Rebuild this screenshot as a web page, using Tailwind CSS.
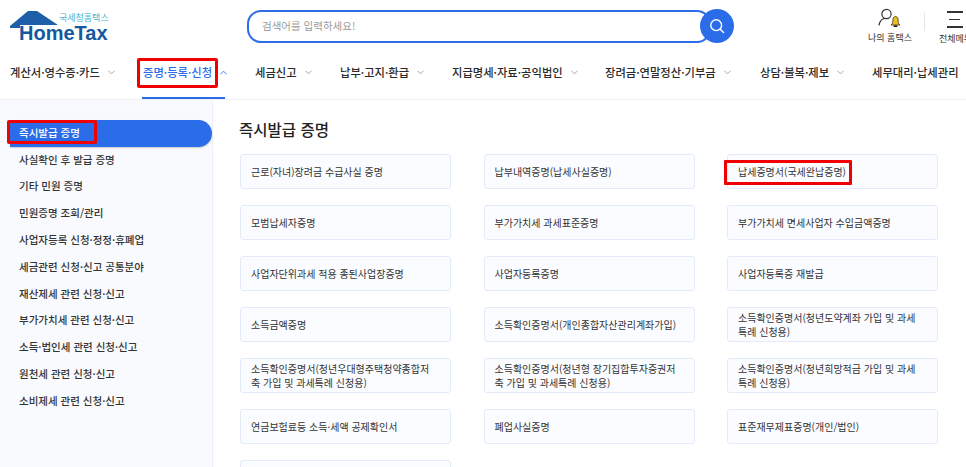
<!DOCTYPE html>
<html lang="ko">
<head>
<meta charset="UTF-8">
<title>HomeTax</title>
<script src="https://cdn.jsdelivr.net/npm/@tailwindcss/browser@4"></script>
</head>
<body class="w-[966px] h-[467px] overflow-hidden bg-white font-['Noto_Sans_CJK_KR','Noto_Sans',sans-serif] text-[#222]">

<!-- Header -->
<header class="h-[100px] border-b border-[#eef0f5]">
  <div class="h-[51px] flex items-start">
    <!-- Logo -->
    <div class="relative w-[247px] h-[51px] shrink-0">
      <svg class="absolute left-[9px] top-[10px]" width="50" height="20" viewBox="0 0 50 20">
        <path d="M1 16 L19 1 L28 1 L49 15 L19 15 L11 15 L11 18 L1 18 Z" fill="#1d5fa8"/>
      </svg>
      <span class="absolute left-[59px] top-[13px] text-[9px] leading-[10px] text-[#45b4d2]">국세청홈택스</span>
      <span class="absolute left-[19px] top-[23px] font-['Liberation_Sans',sans-serif] font-bold text-[20px] leading-[20px] text-[#14589f]">HomeTax</span>
    </div>
    <!-- Search -->
    <div class="flex items-center mt-[9px] w-[487px] shrink-0">
      <div class="w-[466px] h-[33px] border-2 border-[#2b6de8] rounded-[14px] flex items-center pl-[13px] text-[10.5px] text-[#9a9a9a]">검색어를 입력하세요!</div>
      <button class="-ml-[11px] w-[34px] h-[34px] rounded-full bg-[#2b6de8] flex items-center justify-center shrink-0">
        <svg width="16" height="16" viewBox="0 0 16 16" fill="none" stroke="#fff" stroke-width="1.4" stroke-linecap="round"><circle cx="7.2" cy="7.2" r="5.4"/><path d="M11.2 11.2 L14.6 14.6"/></svg>
      </button>
    </div>
    <!-- Right icons -->
    <div class="flex items-start ml-[134px] mt-[8px]">
      <div class="w-[46px] flex flex-col items-center -ml-[1px]">
        <svg width="24" height="20" viewBox="0 0 24 20" fill="none">
          <circle cx="8.5" cy="6" r="4.6" stroke="#333" stroke-width="1.2"/>
          <path d="M1 17 C2 12.5 4.5 10.5 7 10.5 L10 10.5" stroke="#333" stroke-width="1.2" stroke-linecap="round"/>
          <path d="M13 17 C15 16 14.6 14 15 11 C15.3 9.2 16.4 8.5 17.5 8.5 C18.6 8.5 19.7 9.2 20 11 C20.4 14 20 16 22 17 Z" fill="#f3bd15" stroke="#222" stroke-width="0.7"/>
          <rect x="15.5" y="17.3" width="4" height="1.8" rx="0.9" fill="#222"/>
        </svg>
        <span class="mt-[4px] text-[9px] leading-[12px] whitespace-nowrap text-[#333]">나의 홈택스</span>
      </div>
      <div class="w-px h-[18px] bg-[#e6e6e6] ml-[11px] mt-[5px]"></div>
      <div class="ml-[14px] w-[40px] shrink-0 flex flex-col items-start">
        <div class="ml-[8px] mt-[3px] w-[16px] flex flex-col gap-[6px]">
          <div class="h-[1.5px] bg-[#333]"></div>
          <div class="h-[1.5px] w-[11px] ml-[2px] bg-[#333]"></div>
          <div class="h-[1.5px] bg-[#333]"></div>
        </div>
        <span class="mt-[5px] text-[9px] leading-[12px] whitespace-nowrap text-[#333]">전체메뉴</span>
      </div>
    </div>
  </div>

  <!-- Nav -->
  <nav class="h-[48px] flex items-start pl-[10px] pt-[12px] text-[11.3px] leading-[18px] font-medium whitespace-nowrap text-[#2a2a2a]">
    <a class="flex items-center w-[133px]">계산서·영수증·카드
      <svg class="ml-[8px]" width="7" height="5" viewBox="0 0 8 5" fill="none" stroke="#999" stroke-width="1"><path d="M0.5 0.5 L4 4 L7.5 0.5"/></svg></a>
    <a class="relative flex items-center w-[112px] text-[#2b6de8]">증명·등록·신청
      <svg class="ml-[8px]" width="7" height="5" viewBox="0 0 8 5" fill="none" stroke="#2b6de8" stroke-width="1"><path d="M0.5 4.5 L4 1 L7.5 4.5"/></svg>
      <span class="absolute left-[-6px] top-[-5px] w-[81px] h-[30px] border-[3px] border-[#f00000] rounded-[2px]"></span>
      <span class="absolute left-[-1px] top-[34px] w-[83px] h-[2px] bg-[#2b6de8]"></span></a>
    <a class="flex items-center w-[85px]">세금신고
      <svg class="ml-[8px]" width="7" height="5" viewBox="0 0 8 5" fill="none" stroke="#999" stroke-width="1"><path d="M0.5 0.5 L4 4 L7.5 0.5"/></svg></a>
    <a class="flex items-center w-[112px]">납부·고지·환급
      <svg class="ml-[8px]" width="7" height="5" viewBox="0 0 8 5" fill="none" stroke="#999" stroke-width="1"><path d="M0.5 0.5 L4 4 L7.5 0.5"/></svg></a>
    <a class="flex items-center w-[153px]">지급명세·자료·공익법인
      <svg class="ml-[8px]" width="7" height="5" viewBox="0 0 8 5" fill="none" stroke="#999" stroke-width="1"><path d="M0.5 0.5 L4 4 L7.5 0.5"/></svg></a>
    <a class="flex items-center w-[155px]">장려금·연말정산·기부금
      <svg class="ml-[8px]" width="7" height="5" viewBox="0 0 8 5" fill="none" stroke="#999" stroke-width="1"><path d="M0.5 0.5 L4 4 L7.5 0.5"/></svg></a>
    <a class="flex items-center w-[112px]">상담·불복·제보
      <svg class="ml-[8px]" width="7" height="5" viewBox="0 0 8 5" fill="none" stroke="#999" stroke-width="1"><path d="M0.5 0.5 L4 4 L7.5 0.5"/></svg></a>
    <a>세무대리·납세관리</a>
  </nav>
</header>

<div class="flex h-[367px]">
  <!-- Sidebar -->
  <aside class="w-[213px] shrink-0 bg-[#f9fafe] border-r border-[#eef0f5] pt-[20px] text-[10.5px] font-medium text-[#333]">
    <div class="relative ml-[10px] h-[27px] flex items-center pl-[9px] pb-[2px] bg-[#2b6de8] text-white rounded-r-[14px] shadow-[0_1px_2px_rgba(0,0,0,0.2)]">즉시발급 증명
      <span class="absolute left-[-3px] top-[0px] w-[90px] h-[24px] border-[3px] border-[#f00000] rounded-[2px]"></span>
    </div>
    <ul class="pl-[19px] -mt-[1px]">
      <li class="h-[26.8px] flex items-center">사실확인 후 발급 증명</li>
      <li class="h-[26.8px] flex items-center">기타 민원 증명</li>
      <li class="h-[26.8px] flex items-center">민원증명 조회/관리</li>
      <li class="h-[26.8px] flex items-center">사업자등록 신청·정정·휴폐업</li>
      <li class="h-[26.8px] flex items-center">세금관련 신청·신고 공통분야</li>
      <li class="h-[26.8px] flex items-center">재산제세 관련 신청·신고</li>
      <li class="h-[26.8px] flex items-center">부가가치세 관련 신청·신고</li>
      <li class="h-[26.8px] flex items-center">소득·법인세 관련 신청·신고</li>
      <li class="h-[26.8px] flex items-center">원천세 관련 신청·신고</li>
      <li class="h-[26.8px] flex items-center">소비제세 관련 신청·신고</li>
    </ul>
  </aside>

  <!-- Main -->
  <main class="flex-1 overflow-hidden pl-[26px] pt-[18px]">
    <h2 class="text-[15.5px] leading-[22px] font-medium text-[#222]">즉시발급 증명</h2>
    <div class="mt-[14px] ml-[1px] grid grid-cols-[211px_211px_211px] gap-x-[32.5px] gap-y-[16px] text-[10px] leading-[14px] text-[#333]">
      <div class="h-[35px] flex items-center pl-[10px] pr-[18px] bg-[#fbfcff] border border-[#e3ebfb] rounded-[3px]">근로(자녀)장려금 수급사실 증명</div>
      <div class="h-[35px] flex items-center pl-[10px] pr-[18px] bg-[#fbfcff] border border-[#e3ebfb] rounded-[3px]">납부내역증명(납세사실증명)</div>
      <div class="relative h-[35px] flex items-center pl-[10px] pr-[18px] bg-[#fbfcff] border border-[#e3ebfb] rounded-[3px]">납세증명서(국세완납증명)
        <span class="absolute left-[-4px] top-[5px] w-[128px] h-[25px] border-[3px] border-[#f00000] rounded-[1px]"></span>
      </div>
      <div class="h-[35px] flex items-center pl-[10px] pr-[18px] bg-[#fbfcff] border border-[#e3ebfb] rounded-[3px]">모범납세자증명</div>
      <div class="h-[35px] flex items-center pl-[10px] pr-[18px] bg-[#fbfcff] border border-[#e3ebfb] rounded-[3px]">부가가치세 과세표준증명</div>
      <div class="h-[35px] flex items-center pl-[10px] pr-[18px] bg-[#fbfcff] border border-[#e3ebfb] rounded-[3px]">부가가치세 면세사업자 수입금액증명</div>
      <div class="h-[35px] flex items-center pl-[10px] pr-[18px] bg-[#fbfcff] border border-[#e3ebfb] rounded-[3px]">사업자단위과세 적용 종된사업장증명</div>
      <div class="h-[35px] flex items-center pl-[10px] pr-[18px] bg-[#fbfcff] border border-[#e3ebfb] rounded-[3px]">사업자등록증명</div>
      <div class="h-[35px] flex items-center pl-[10px] pr-[18px] bg-[#fbfcff] border border-[#e3ebfb] rounded-[3px]">사업자등록증 재발급</div>
      <div class="h-[35px] flex items-center pl-[10px] pr-[18px] bg-[#fbfcff] border border-[#e3ebfb] rounded-[3px]">소득금액증명</div>
      <div class="h-[35px] flex items-center pl-[10px] pr-[11px] bg-[#fbfcff] border border-[#e3ebfb] rounded-[3px]">소득확인증명서(개인종합자산관리계좌가입)</div>
      <div class="h-[35px] flex items-center pl-[10px] pr-[18px] bg-[#fbfcff] border border-[#e3ebfb] rounded-[3px]">소득확인증명서(청년도약계좌 가입 및 과세특례 신청용)</div>
      <div class="h-[35px] flex items-center pl-[10px] pr-[12px] bg-[#fbfcff] border border-[#e3ebfb] rounded-[3px]">소득확인증명서(청년우대형주택청약종합저축 가입 및 과세특례 신청용)</div>
      <div class="h-[35px] flex items-center pl-[10px] pr-[12px] bg-[#fbfcff] border border-[#e3ebfb] rounded-[3px]">소득확인증명서(청년형 장기집합투자증권저축 가입 및 과세특례 신청용)</div>
      <div class="h-[35px] flex items-center pl-[10px] pr-[18px] bg-[#fbfcff] border border-[#e3ebfb] rounded-[3px]">소득확인증명서(청년희망적금 가입 및 과세특례 신청용)</div>
      <div class="h-[35px] flex items-center pl-[10px] pr-[18px] bg-[#fbfcff] border border-[#e3ebfb] rounded-[3px]">연금보험료등 소득·세액 공제확인서</div>
      <div class="h-[35px] flex items-center pl-[10px] pr-[18px] bg-[#fbfcff] border border-[#e3ebfb] rounded-[3px]">폐업사실증명</div>
      <div class="h-[35px] flex items-center pl-[10px] pr-[18px] bg-[#fbfcff] border border-[#e3ebfb] rounded-[3px]">표준재무제표증명(개인/법인)</div>
      <div class="h-[35px] bg-[#fbfcff] border border-[#e3ebfb] rounded-[3px]"></div>
    </div>
  </main>
</div>
</body>
</html>
